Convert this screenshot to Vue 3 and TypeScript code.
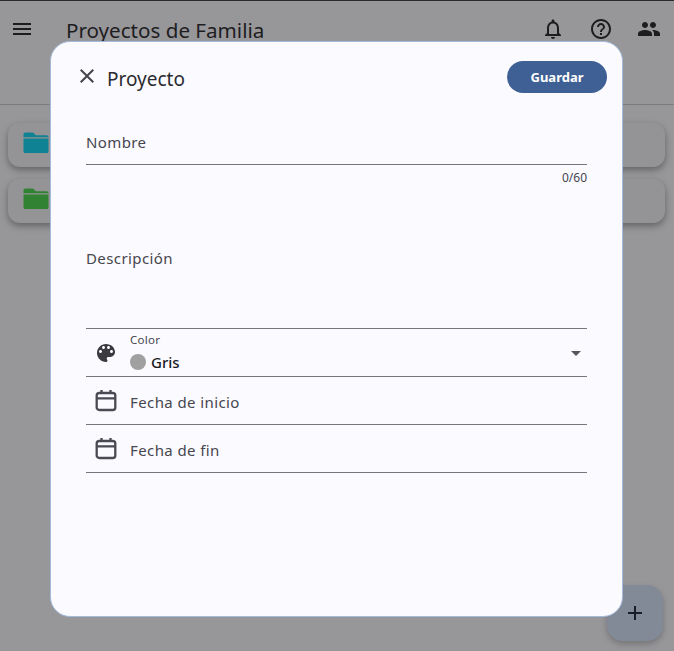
<script setup lang="ts">
const folders = [
  { id: 1, color: '#00d4f4' },
  { id: 2, color: '#41d444' },
]
const dates = ['Fecha de inicio', 'Fecha de fin']
</script>

<template>
  <div class="page">
    <header class="appbar">
      <svg class="ico menu" viewBox="0 0 24 24"><path d="M3 18h18v-2H3v2zm0-5h18v-2H3v2zm0-7v2h18V6H3z" /></svg>
      <h1 class="title">Proyectos de Familia</h1>
      <div class="actions">
        <svg class="ico" viewBox="0 0 24 24"><path d="M12 22c1.100 0 2-.9 2-2h-4c0 1.100.9 2 2 2zm6-6v-5c0-3.070-1.630-5.640-4.500-6.320V4c0-.83-.67-1.500-1.500-1.500s-1.500.67-1.500 1.500v.68C7.640 5.360 6 7.920 6 11v5l-2 2v1h16v-1l-2-2zm-2 1H8v-6c0-2.480 1.510-4.500 4-4.500s4 2.020 4 4.500v6z" /></svg>
        <svg class="ico" viewBox="0 0 24 24"><path d="M11 18h2v-2h-2v2zm1-16C6.480 2 2 6.480 2 12s4.480 10 10 10 10-4.480 10-10S17.520 2 12 2zm0 18c-4.410 0-8-3.590-8-8s3.590-8 8-8 8 3.590 8 8-3.590 8-8 8zm0-14c-2.210 0-4 1.790-4 4h2c0-1.100.9-2 2-2s2 .9 2 2c0 2-3 1.750-3 5h2c0-2.250 3-2.500 3-5 0-2.210-1.790-4-4-4z" /></svg>
        <svg class="ico" viewBox="0 0 24 24"><path d="M16 11c1.660 0 2.990-1.340 2.990-3S17.660 5 16 5s-3 1.340-3 3 1.340 3 3 3zm-8 0c1.660 0 2.990-1.340 2.990-3S9.660 5 8 5 5 6.340 5 8s1.340 3 3 3zm0 2c-2.330 0-7 1.170-7 3.500V19h14v-2.500C15 14.170 10.330 13 8 13zm8 0c-.29 0-.62.02-.97.05 1.160.84 1.970 1.970 1.970 3.450V19h6v-2.500c0-2.330-4.670-3.500-7-3.500z" /></svg>
      </div>
    </header>

    <main class="list">
      <div v-for="f in folders" :key="f.id" class="card">
        <svg class="folder" viewBox="0 0 24 24" :style="{ fill: f.color }">
          <path d="M2 7.300V5C2 4 2.900 3.500 3.800 3.500h5.700L12 5.800h8.500C21.500 5.800 22 6.400 22 7.300z" />
          <path d="M2 8.300h20v10.200c0 1-.7 1.500-1.500 1.500h-17C2.700 20 2 19.500 2 18.500z" />
        </svg>
      </div>
    </main>

    <div class="fab">
      <svg class="plus" viewBox="0 0 24 24"><path d="M19 13h-6v6h-2v-6H5v-2h6V5h2v6h6v2z" /></svg>
    </div>

    <div class="scrim"></div>

    <section class="dialog">
      <div class="dialog-head">
        <svg class="close" viewBox="0 0 24 24"><path d="M19 6.410 17.590 5 12 10.590 6.410 5 5 6.410 10.590 12 5 17.590 6.410 19 12 13.410 17.590 19 19 17.590 13.410 12z" /></svg>
        <h2 class="dialog-title">Proyecto</h2>
        <button class="save" type="button">Guardar</button>
      </div>

      <div class="form">
        <div class="field name"><span class="label">Nombre</span></div>
        <div class="counter">0/60</div>
        <div class="field desc"><span class="label">Descripción</span></div>

        <div class="field row select">
          <svg class="row-ico" viewBox="0 0 24 24"><path d="M12 3c-4.970 0-9 4.030-9 9s4.030 9 9 9c.830 0 1.500-.670 1.500-1.500 0-.390-.150-.740-.390-1.010-.230-.260-.380-.610-.380-.990 0-.830.670-1.500 1.500-1.500H16c2.760 0 5-2.240 5-5 0-4.420-4.030-8-9-8zm-5.500 9c-.830 0-1.500-.670-1.500-1.500S5.670 9 6.500 9 8 9.670 8 10.500 7.330 12 6.500 12zm3-4C8.670 8 8 7.330 8 6.500S8.670 5 9.500 5s1.500.670 1.500 1.500S10.330 8 9.500 8zm5 0c-.830 0-1.500-.670-1.500-1.500S13.670 5 14.500 5s1.500.670 1.500 1.500S15.330 8 14.500 8zm3 4c-.830 0-1.500-.670-1.500-1.500S16.670 9 17.500 9s1.500.670 1.500 1.500-.670 1.500-1.500 1.500z" /></svg>
          <div class="select-body">
            <span class="mini">Color</span>
            <span class="value"><i class="dot"></i>Gris</span>
          </div>
          <span class="caret"></span>
        </div>

        <div v-for="d in dates" :key="d" class="field row date">
          <svg class="row-ico cal" viewBox="0 0 24 24">
            <rect x="2.700" y="4" width="18.600" height="17" rx="2.600" />
            <path d="M2.700 9.300h18.600M7.500 1v3M16.500 1v3" />
          </svg>
          <span class="label">{{ d }}</span>
        </div>
      </div>
    </section>
  </div>
</template>

<style>
html, body { margin: 0; padding: 0; }
</style>

<style scoped>
.page {
  position: relative;
  width: 674px;
  height: 651px;
  overflow: hidden;
  background: #fbf9ff;
  font-family: "Noto Sans", "Open Sans", sans-serif;
  color: #1b1b1f;
}
.appbar {
  box-sizing: border-box;
  height: 105px;
  border-bottom: 1px solid #c9c7cc;
  border-top: 1px solid #333;
  display: flex;
  align-items: flex-start;
  padding: 16px 13px 0 10px;
}
.ico { width: 24px; height: 24px; fill: #1b1b1f; display: block; }
.title {
  margin: -2px 0 0 32px;
  font-size: 20.600px;
  font-weight: 400;
  line-height: 30px;
}
.actions { margin-left: auto; display: flex; gap: 24px; }
.list { padding: 18px 9px 0 8px; display: flex; flex-direction: column; gap: 12px; }
.card {
  height: 44px;
  border-radius: 12px;
  background: #f6f4fa;
  box-shadow: 0 3px 7px rgba(0, 0, 0, .38);
  display: flex;
  align-items: center;
  padding-left: 13px;
}
.folder { width: 30px; height: 30px; margin-bottom: 5px; }
.fab {
  position: absolute;
  left: 607px;
  top: 585px;
  width: 56px;
  height: 56px;
  border-radius: 16px;
  background: #d5e3fd;
  box-shadow: 0 3px 6px rgba(0, 0, 0, .25);
  display: flex;
  align-items: center;
  justify-content: center;
}
.plus { width: 24px; height: 24px; fill: #0f1c2e; }
.scrim { position: absolute; inset: 0; background: rgba(32, 32, 32, .46); }
.dialog {
  position: absolute;
  left: 50px;
  top: 41px;
  box-sizing: border-box;
  width: 573px;
  height: 576px;
  background: #fafaff;
  border: 1px solid #a3bbdb;
  border-radius: 20px;
  padding: 18px 15px 0 24px;
}
.dialog-head { display: flex; align-items: center; height: 33px; }
.close { width: 24px; height: 24px; fill: #44444c; position: relative; top: -1px; }
.dialog-title { margin: 0 0 0 8px; font-size: 19px; font-weight: 400; color: #2b2b31; position: relative; top: 2px; }
.save {
  margin-left: auto;
  width: 100px;
  height: 32px;
  border: 0;
  border-radius: 16px;
  background: #3f6094;
  color: #fff;
  font: 700 13px "Noto Sans", sans-serif;
}
.form { margin: 17px 20px 0 11px; }
.field { box-sizing: border-box; border-bottom: 1px solid #77767c; }
.label { font-size: 15px; color: #46464e; letter-spacing: .4px; }
.name { height: 55px; padding-top: 22px; line-height: 20px; }
.counter { text-align: right; font-size: 12px; line-height: 16px; color: #46464e; margin-top: 5px; }
.desc { height: 143px; padding-top: 62px; line-height: 20px; }
.row { display: flex; align-items: center; height: 48px; }
.row-ico { width: 24px; height: 24px; fill: #3a3a40; margin-left: 8px; flex: none; }
.cal { fill: none; stroke: #4a4a52; stroke-width: 2.300; }
.date .label { margin-left: 12px; position: relative; top: 1px; }
.select-body { display: flex; flex-direction: column; margin-left: 12px; }
.mini { font-size: 11.500px; line-height: 16px; color: #46464e; letter-spacing: .3px; margin-top: -2px; }
.value { display: flex; align-items: center; font-size: 15px; font-weight: 500; line-height: 20px; margin-top: 4px; }
.dot { width: 16px; height: 16px; border-radius: 50%; background: #a0a0a0; margin-right: 5px; }
.caret {
  margin-left: auto;
  margin-right: 6px;
  margin-top: 2px;
  width: 0;
  height: 0;
  border-left: 5.500px solid transparent;
  border-right: 5.500px solid transparent;
  border-top: 5.500px solid #55555c;
}
</style>
